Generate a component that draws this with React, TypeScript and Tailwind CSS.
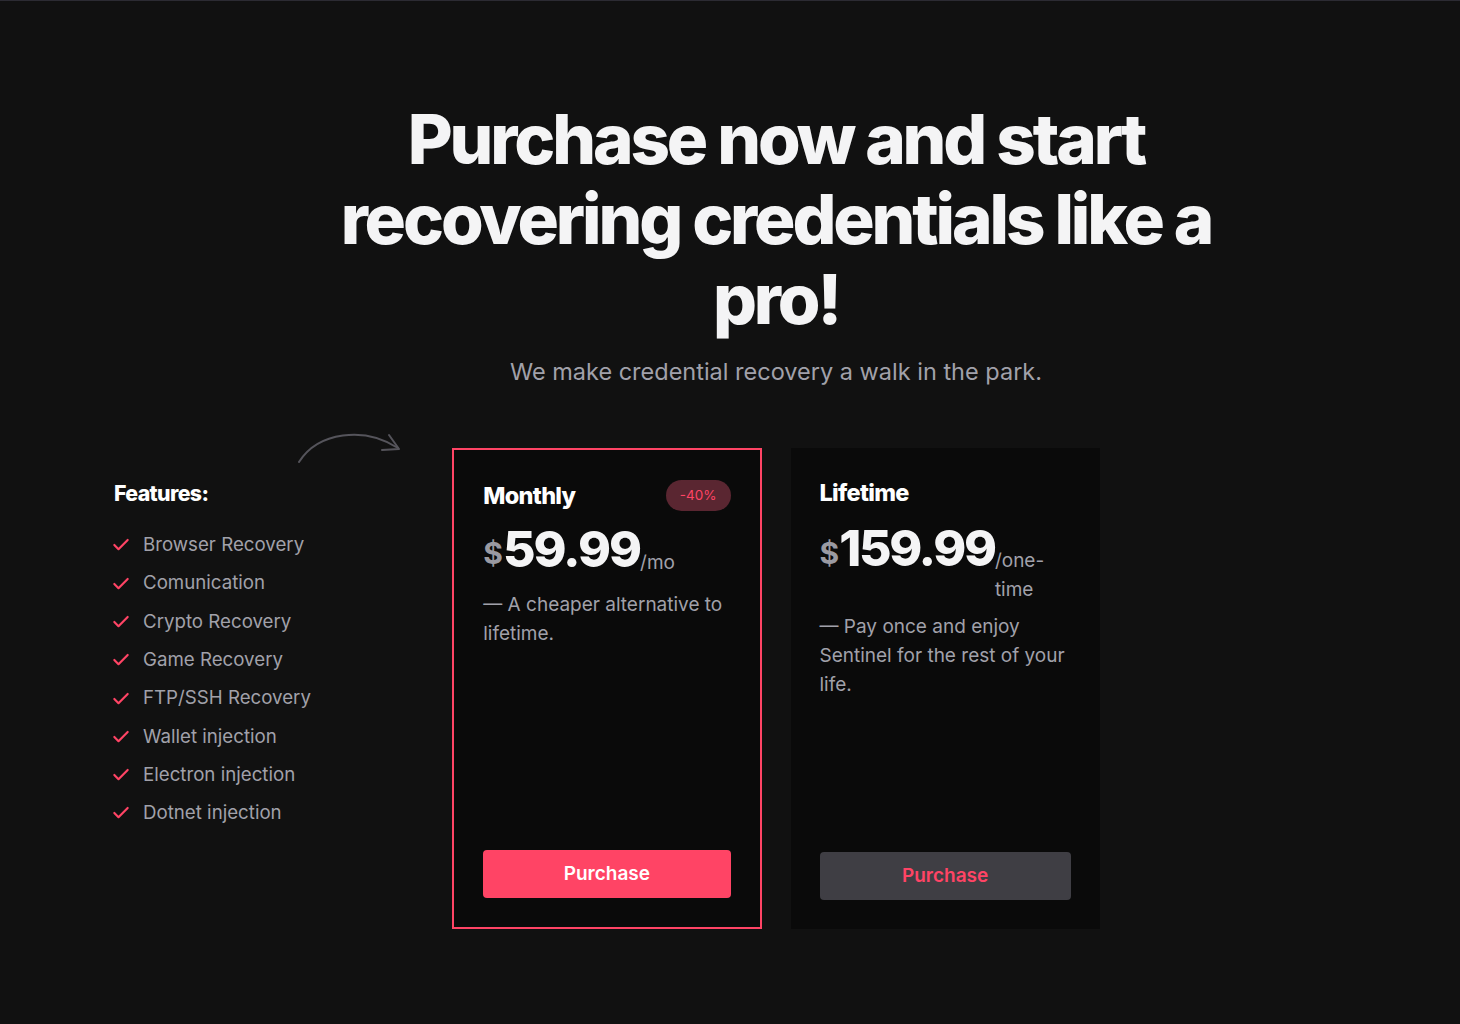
import { Check } from "lucide-react";

const features = [
  "Browser Recovery",
  "Comunication",
  "Crypto Recovery",
  "Game Recovery",
  "FTP/SSH Recovery",
  "Wallet injection",
  "Electron injection",
  "Dotnet injection",
];

export default function App() {
  return (
    <div className="min-h-[1024px] bg-[#111111] border-t border-[#2c2b33] font-['Inter',sans-serif]">
      <div className="w-[1324px] ml-[114px] pt-[98px]">
        <h1 className="mx-auto w-[920px] text-center text-[69px] leading-[80px] font-extrabold tracking-[-0.045em] text-[#f4f4f5]">
          Purchase now and start recovering credentials like a pro!
        </h1>
        <p className="mt-[15px] text-center text-[23.5px] text-[#a1a1aa]">
          We make credential recovery a walk in the park.
        </p>

        <div className="mt-[59px] grid grid-cols-4 gap-[29px]">
          {/* features */}
          <div className="relative pt-[30px]">
            <svg
              className="absolute left-[184px] top-[-16px]"
              width="104"
              height="34"
              viewBox="0 0 104 34"
              fill="none"
              stroke="#55545b"
              strokeWidth="2"
              strokeLinecap="round"
              strokeLinejoin="round"
            >
              <path d="M1 30 C 20 0, 66 -6, 100 16" />
              <path d="M91 3 L101 17 L84 18" />
            </svg>
            <h3 className="text-[21.3px] font-extrabold tracking-[-0.03em] text-white">Features:</h3>
            <ul className="mt-[21px] flex flex-col gap-[10px]">
              {features.map((f) => (
                <li key={f} className="flex items-center gap-[12px] text-[18.7px] leading-[28.3px] text-[#a1a1aa]">
                  <Check className="-ml-[3px] w-[20px] h-[20px] text-[#ff4465]" strokeWidth={2.6} />
                  {f}
                </li>
              ))}
            </ul>
          </div>

          {/* monthly */}
          <div className="flex flex-col h-[481px] bg-[#0a0a0a] border-2 border-[#ff4465] px-[29px] pt-[28px] pb-[29px]">
            <div className="flex items-center justify-between">
              <h3 className="text-[23.5px] font-extrabold tracking-[-0.03em] text-white">Monthly</h3>
              <span className="rounded-full bg-[#5a2631] px-[14px] py-[6px] text-[13.5px] leading-[19px] text-[#ff4465]">-40%</span>
            </div>
            <div className="mt-[6px] flex items-end">
              <span className="text-[30px] font-bold leading-[50px] text-[#9a9aa2]">$</span>
              <span className="text-[50px] font-extrabold leading-[58px] tracking-[-0.04em] text-[#f4f4f5]">59.99</span>
              <span className="text-[19px] leading-[28px] text-[#a1a1aa] pb-[1px]">/mo</span>
            </div>
            <p className="mt-[12px] text-[19px] leading-[29px] text-[#a1a1aa]">— A cheaper alternative to lifetime.</p>
            <button className="mt-auto h-[48px] w-full rounded-[4px] bg-[#ff4465] text-[19px] font-semibold text-white">
              Purchase
            </button>
          </div>

          {/* lifetime */}
          <div className="flex flex-col h-[481px] bg-[#0a0a0a] px-[29px] pt-[31px] pb-[29px]">
            <h3 className="text-[23.5px] font-extrabold tracking-[-0.03em] text-white leading-[28px]">Lifetime</h3>
            <div className="mt-[12px] flex items-start">
              <span className="mt-[14px] text-[30px] font-bold leading-[40px] text-[#9a9aa2]">$</span>
              <span className="text-[50px] font-extrabold leading-[58px] tracking-[-0.045em] text-[#f4f4f5]">159.99</span>
              <span className="mt-[27px] w-[50px] text-[19px] leading-[29px] text-[#a1a1aa]">/one-time</span>
            </div>
            <p className="mt-[8px] text-[19px] leading-[29px] text-[#a1a1aa]">— Pay once and enjoy Sentinel for the rest of your life.</p>
            <button className="mt-auto h-[48px] w-full rounded-[4px] bg-[#3f3e44] text-[19px] font-semibold text-[#ff4465]">
              Purchase
            </button>
          </div>
        </div>
      </div>
    </div>
  );
}
